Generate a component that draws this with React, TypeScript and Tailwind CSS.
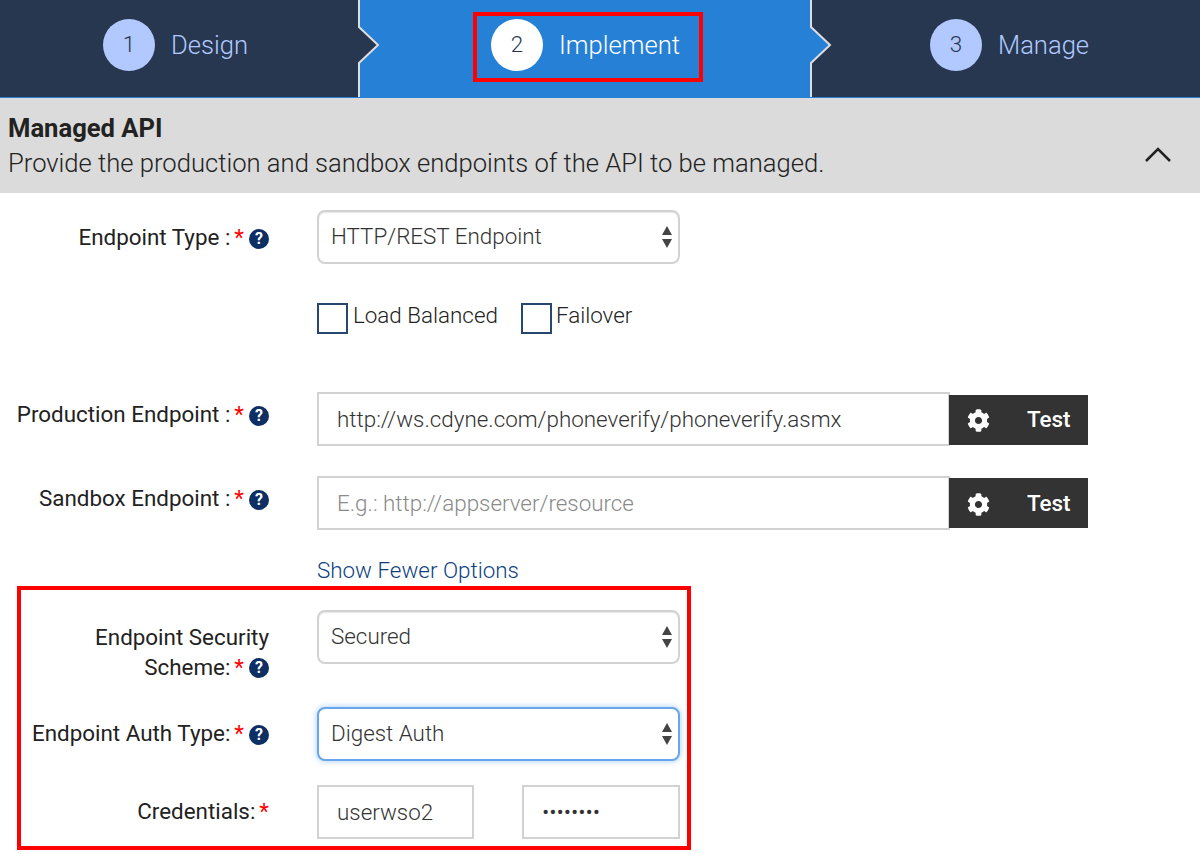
import React from "react";
import { FaCog } from "react-icons/fa";

function StepArrow({ fill }: { fill: string }) {
  return (
    <svg
      className="absolute top-0 left-full z-10 -ml-[2px]"
      width="24"
      height="97"
      viewBox="0 0 24 97"
    >
      <path d="M1 27 L20 45 L1 63 Z" fill={fill} />
      <path
        d="M1 0 V27 L20 45 L1 63 V97"
        fill="none"
        stroke="#dddddd"
        strokeWidth="2"
      />
    </svg>
  );
}

function Help() {
  return (
    <span className="mt-[2px] ml-[5px] inline-flex h-5 w-5 items-center justify-center rounded-full bg-[#0d2f63] text-[16px] leading-none font-bold text-white">
      ?
    </span>
  );
}

function Star() {
  return <span className="ml-[4px] text-[#f00]">*</span>;
}

function SelectBox({
  value,
  focused,
}: {
  value: string;
  focused?: boolean;
}) {
  const ring = focused
    ? "border-[#66a6ec] shadow-[0_0_6px_rgba(102,166,236,0.6)]"
    : "border-[#d2d2d2] shadow-[inset_0_1px_1px_rgba(0,0,0,0.1)]";
  return (
    <div className="relative h-[54px] w-[363px]">
      <select
        defaultValue={value}
        className={`h-full w-full appearance-none rounded-lg border-2 bg-white pl-[12px] text-[22.4px] font-light text-[#333] ${ring}`}
      >
        <option>{value}</option>
      </select>
      <svg
        className="pointer-events-none absolute top-[15px] right-[7px]"
        width="12"
        height="24"
        viewBox="0 0 12 24"
      >
        <path d="M6 1 L11 10 H1 Z M1 14 H11 L6 23 Z" fill="#444" />
      </svg>
    </div>
  );
}

function EndpointRow({
  label,
  value,
  placeholder,
  buttonClass,
}: {
  label: string;
  value?: string;
  placeholder?: string;
  buttonClass?: string;
}) {
  return (
    <div className="grid grid-cols-[317px_1fr]">
      <div className="flex items-center justify-end pr-[48px] pb-[9px] text-[22.4px] text-[#222]">
        {label} :<Star />
        <Help />
      </div>
      <div className="flex items-center">
        <input
          readOnly
          value={value}
          placeholder={placeholder}
          className="h-[54px] w-[633px] border-2 border-[#d2d2d2] bg-white pl-[18px] text-[22.4px] font-light text-[#333] placeholder:text-[#8a8a8a]"
        />
        <button
          className={`-ml-px flex h-[50px] w-[139px] items-center bg-[#333] pl-[18px] text-[22.4px] font-medium text-white ${buttonClass ?? ""}`}
        >
          <FaCog size={23} />
          <span className="ml-[37px]">Test</span>
        </button>
      </div>
    </div>
  );
}

export default function App() {
  return (
    <div className="min-h-[854px] bg-white font-['Roboto',sans-serif]">
      <div className="flex h-[98px] border-b border-[#2680d5] text-[25.6px] font-light">
        <div className="relative flex w-[360px] items-start bg-[#27374f] pt-[19px] pl-[103px] text-[#b1c9ff]">
          <div className="flex h-[52px] items-center">
            <span className="flex h-[52px] w-[52px] items-center justify-center rounded-full bg-[#b1c9ff] text-[22.4px] text-[#27374f]">
              1
            </span>
            <span className="ml-4">Design</span>
          </div>
          <StepArrow fill="#27374f" />
        </div>
        <div className="relative w-[452px] bg-[#2680d5] pt-[12px] pl-[113px] text-white">
          <div className="h-[70px] w-[230px] border-4 border-[#f00] pt-[3px] pl-[14px]">
            <div className="flex h-[52px] items-center">
              <span className="flex h-[52px] w-[52px] items-center justify-center rounded-full bg-white text-[22.4px] text-[#27374f]">
                2
              </span>
              <span className="ml-4">Implement</span>
            </div>
          </div>
          <StepArrow fill="#2680d5" />
        </div>
        <div className="w-[388px] bg-[#27374f] pt-[19px] pl-[118px] text-[#b1c9ff]">
          <div className="flex h-[52px] items-center">
            <span className="flex h-[52px] w-[52px] items-center justify-center rounded-full bg-[#b1c9ff] text-[22.4px] text-[#27374f]">
              3
            </span>
            <span className="ml-4">Manage</span>
          </div>
        </div>
      </div>

      <div className="flex h-[95px] items-center justify-between bg-[#dbdbdb] pr-[28px] pl-2 text-[#222]">
        <div className="pt-[2px]">
          <div className="text-[25.6px] leading-[32px] font-bold">Managed API</div>
          <div className="text-[25.6px] leading-[38px] font-light">
            Provide the production and sandbox endpoints of the API to be managed.
          </div>
        </div>
        <svg className="mt-[18px]" width="28" height="16" viewBox="0 0 28 16">
          <path d="M2 14 L14 2 L26 14" fill="none" stroke="#222" strokeWidth="2.5" />
        </svg>
      </div>

      <div className="pt-[17px]">
        <div className="grid grid-cols-[317px_1fr]">
          <div className="flex items-center justify-end pt-[1px] pr-[48px] text-[22.4px] text-[#222]">
            Endpoint Type :<Star />
            <Help />
          </div>
          <SelectBox value="HTTP/REST Endpoint" />
        </div>

        <div className="mt-[39px] flex h-[31px] pl-[317px] text-[22.4px] font-light text-[#222]">
          <label className="flex">
            <span className="h-[31px] w-[31px] border-2 border-[#27476f]" />
            <span className="ml-[5px] leading-[25px]">Load Balanced</span>
          </label>
          <label className="ml-[23px] flex">
            <span className="h-[31px] w-[31px] border-2 border-[#27476f]" />
            <span className="ml-[4px] leading-[25px]">Failover</span>
          </label>
        </div>

        <div className="mt-[58px]">
          <EndpointRow
            label="Production Endpoint"
            value="http://ws.cdyne.com/phoneverify/phoneverify.asmx"
            buttonClass="mt-[2px]"
          />
        </div>
        <div className="mt-[30px]">
          <EndpointRow
            label="Sandbox Endpoint"
            placeholder="E.g.: http://appserver/resource"
            buttonClass="pt-[2px]"
          />
        </div>

        <div className="flex h-[56px] items-end pb-[2px] pl-[317px]">
          <a className="text-[22.4px] leading-[28px] font-light text-[#0d3f7f]">
            Show Fewer Options
          </a>
        </div>

        <div className="ml-[17px] w-[674px] border-4 border-[#f00] pt-[20px] pb-[7px] text-[22.4px] text-[#222]">
          <div className="grid h-[54px] grid-cols-[296px_1fr]">
            <div className="pt-[12px] pr-[48px] text-right leading-[30px]">
              Endpoint Security
              <br />
              <span className="inline-flex items-center">
                Scheme:
                <Star />
                <Help />
              </span>
            </div>
            <SelectBox value="Secured" />
          </div>
          <div className="mt-[43px] grid grid-cols-[296px_1fr]">
            <div className="flex items-center justify-end pr-[48px]">
              Endpoint Auth Type:
              <Star />
              <Help />
            </div>
            <SelectBox value="Digest Auth" focused />
          </div>
          <div className="mt-[24px] grid grid-cols-[296px_1fr]">
            <div className="flex items-center justify-end pr-[48px]">
              Credentials:
              <Star />
            </div>
            <div className="flex gap-[48px]">
              <input
                readOnly
                value="userwso2"
                className="h-[54px] w-[157px] border-2 border-[#d2d2d2] pl-[18px] text-[22.4px] font-light text-[#333]"
              />
              <input
                readOnly
                type="password"
                value="password"
                className="h-[54px] w-[158px] border-2 border-[#d2d2d2] pl-[18px] text-[22.4px] font-light text-[#333]"
              />
            </div>
          </div>
        </div>
      </div>
    </div>
  );
}
